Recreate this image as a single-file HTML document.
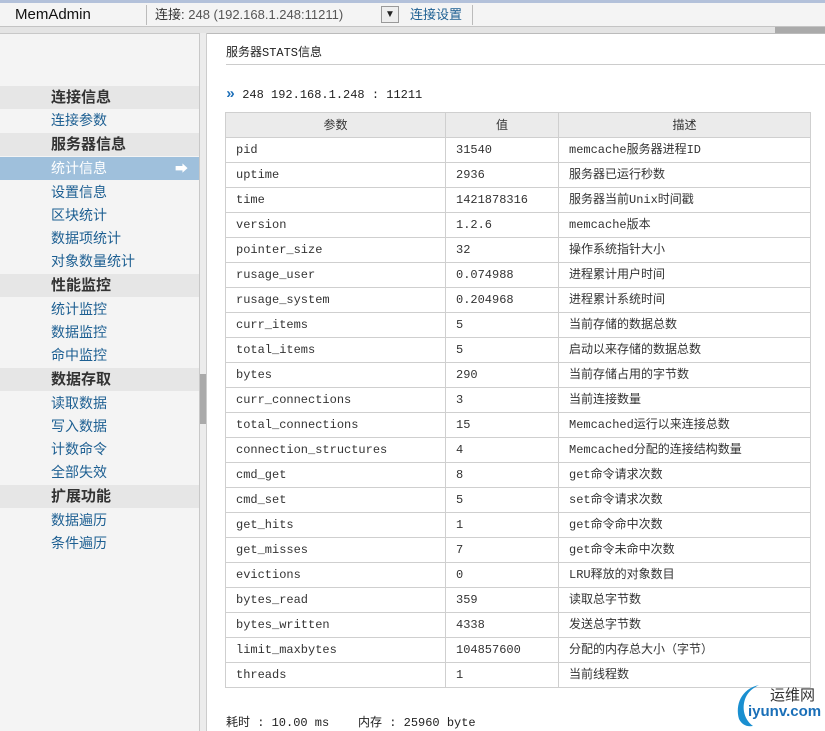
<!DOCTYPE html>
<html><head><meta charset="utf-8"><style>
*{margin:0;padding:0;box-sizing:border-box}
body{width:825px;height:731px;overflow:hidden;background:#fff;position:relative;font-family:"Liberation Sans","Noto Sans CJK SC",sans-serif;font-size:13px;color:#222}
.a{position:absolute}
#top{left:0;top:0;width:825px;height:27px;background:#f4f4f4;border-top:3px solid #b3c1da;border-bottom:1px solid #c4c4c4}
#hs{left:0;top:27px;width:825px;height:7px;background:#e4e4e4;border-bottom:1px solid #bbb}
#side{left:0;top:33px;width:200px;height:698px;background:#f4f4f4;border-right:1px solid #c8c8c8;border-top:1px solid #c8c8c8}
.it{position:absolute;left:0;width:199px;height:23px;line-height:23px;padding-left:51px;font-size:14px;color:#1d5f92}
.hd{background:#e6e6e6;color:#333;font-weight:bold;font-size:15px}
.sel{background:#9fc0dc;color:#fff}
#vs{left:200px;top:33px;width:7px;height:698px;background:#ececec;border-right:1px solid #ccc}
.mono{font-family:"Liberation Mono","Noto Sans CJK SC",monospace}
table{border-collapse:collapse;position:absolute;left:225px;top:112px;width:586px;table-layout:fixed}
td,th{border:1px solid #cfcfcf;height:25px;line-height:23px;font-size:12px;padding:0 0 0 10px;text-align:left;font-weight:normal;font-family:"Liberation Mono","Noto Sans CJK SC",monospace;color:#333;vertical-align:middle;white-space:nowrap;overflow:hidden}
th{background:#ebebeb;text-align:center;padding:0;font-family:"Liberation Sans","Noto Sans CJK SC",sans-serif}
</style></head><body>
<div id="top" class="a">
<div class="a" style="left:15px;top:0;line-height:24px;font-size:15px;color:#111">MemAdmin</div>
<div class="a" style="left:146px;top:2px;width:1px;height:20px;background:#bbb"></div>
<div class="a" style="left:155px;top:0;line-height:24px;font-size:13px;color:#333">连接: <span style="color:#555">248 (192.168.1.248:11211)</span></div>
<div class="a" style="left:381px;top:3px;width:18px;height:17px;border:1px solid #999;background:#eee;font-size:10px;text-align:center;line-height:16px">▼</div>
<div class="a" style="left:410px;top:0;line-height:24px;font-size:13px;color:#1d5f92">连接设置</div>
<div class="a" style="left:472px;top:2px;width:1px;height:20px;background:#bbb"></div>
</div>
<div id="hs" class="a"><div class="a" style="left:775px;top:0;width:50px;height:6px;background:#aaa"></div></div>
<div id="side" class="a">
<div class="it hd" style="top:52px">连接信息</div>
<div class="it" style="top:75px">连接参数</div>
<div class="it hd" style="top:99px">服务器信息</div>
<div class="it sel" style="top:123px">统计信息<span style="position:absolute;left:175px;font-size:13px">➡</span></div>
<div class="it" style="top:147px">设置信息</div>
<div class="it" style="top:170px">区块统计</div>
<div class="it" style="top:193px">数据项统计</div>
<div class="it" style="top:216px">对象数量统计</div>
<div class="it hd" style="top:240px">性能监控</div>
<div class="it" style="top:264px">统计监控</div>
<div class="it" style="top:287px">数据监控</div>
<div class="it" style="top:310px">命中监控</div>
<div class="it hd" style="top:334px">数据存取</div>
<div class="it" style="top:358px">读取数据</div>
<div class="it" style="top:381px">写入数据</div>
<div class="it" style="top:404px">计数命令</div>
<div class="it" style="top:427px">全部失效</div>
<div class="it hd" style="top:451px">扩展功能</div>
<div class="it" style="top:475px">数据遍历</div>
<div class="it" style="top:498px">条件遍历</div>
</div>
<div id="vs" class="a"><div class="a" style="left:0;top:341px;width:6px;height:50px;background:#aaa"></div></div>
<div class="a mono" style="left:226px;top:43px;font-size:12px;color:#222">服务器STATS信息</div>
<div class="a" style="left:226px;top:64px;width:599px;height:1px;background:#ccc"></div>
<div class="a mono" style="left:226px;top:86px;font-size:12px;color:#222"><span style="color:#1d6fb8;font-weight:bold;font-size:15px">»</span> 248 192.168.1.248 : 11211</div>
<table>
<colgroup><col style="width:220px"><col style="width:113px"><col></colgroup>
<tr><th>参数</th><th>值</th><th>描述</th></tr>
<tr><td>pid</td><td>31540</td><td>memcache服务器进程ID</td></tr>
<tr><td>uptime</td><td>2936</td><td>服务器已运行秒数</td></tr>
<tr><td>time</td><td>1421878316</td><td>服务器当前Unix时间戳</td></tr>
<tr><td>version</td><td>1.2.6</td><td>memcache版本</td></tr>
<tr><td>pointer_size</td><td>32</td><td>操作系统指针大小</td></tr>
<tr><td>rusage_user</td><td>0.074988</td><td>进程累计用户时间</td></tr>
<tr><td>rusage_system</td><td>0.204968</td><td>进程累计系统时间</td></tr>
<tr><td>curr_items</td><td>5</td><td>当前存储的数据总数</td></tr>
<tr><td>total_items</td><td>5</td><td>启动以来存储的数据总数</td></tr>
<tr><td>bytes</td><td>290</td><td>当前存储占用的字节数</td></tr>
<tr><td>curr_connections</td><td>3</td><td>当前连接数量</td></tr>
<tr><td>total_connections</td><td>15</td><td>Memcached运行以来连接总数</td></tr>
<tr><td>connection_structures</td><td>4</td><td>Memcached分配的连接结构数量</td></tr>
<tr><td>cmd_get</td><td>8</td><td>get命令请求次数</td></tr>
<tr><td>cmd_set</td><td>5</td><td>set命令请求次数</td></tr>
<tr><td>get_hits</td><td>1</td><td>get命令命中次数</td></tr>
<tr><td>get_misses</td><td>7</td><td>get命令未命中次数</td></tr>
<tr><td>evictions</td><td>0</td><td>LRU释放的对象数目</td></tr>
<tr><td>bytes_read</td><td>359</td><td>读取总字节数</td></tr>
<tr><td>bytes_written</td><td>4338</td><td>发送总字节数</td></tr>
<tr><td>limit_maxbytes</td><td>104857600</td><td>分配的内存总大小（字节）</td></tr>
<tr><td>threads</td><td>1</td><td>当前线程数</td></tr>
</table>
<div class="a mono" style="left:226px;top:713px;font-size:12px;color:#222;white-space:pre">耗时 : 10.00 ms    内存 : 25960 byte</div>
<svg class="a" style="left:733px;top:683px" width="30" height="44"><path d="M26 2 C8 6 2 22 6 36 C9 42 14 44 20 43 C10 36 8 22 14 12 C17 7 22 4 26 2Z" fill="#1a8fd0"/></svg>
<div class="a" style="left:770px;top:684px;font-size:15px;color:#333">运维网</div>
<div class="a" style="left:748px;top:703px;font-size:15px;font-weight:bold;color:#1a6fb8">iyunv.com</div>
</body></html>
